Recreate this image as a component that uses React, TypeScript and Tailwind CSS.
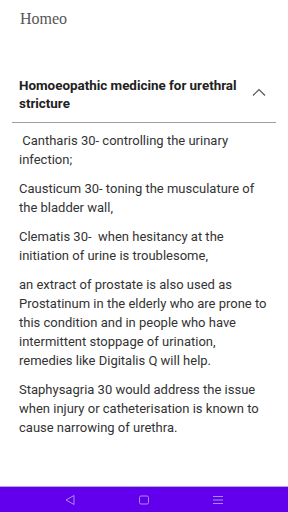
import React from "react";

const paragraphs = [
  " Cantharis 30- controlling the urinary infection;",
  "Causticum 30- toning the musculature of the bladder wall,",
  "Clematis 30-  when hesitancy at the initiation of urine is troublesome,",
  "an extract of prostate is also used as Prostatinum in the elderly who are prone to this condition and in people who have intermittent stoppage of urination, remedies like Digitalis Q will help.",
  "Staphysagria 30 would address the issue when injury or catheterisation is known to cause narrowing of urethra.",
];

export default function App() {
  return (
    <div className="w-[288px] h-[512px] bg-white flex flex-col overflow-hidden">
      <div className="flex-1 flex flex-col">
        {/* app bar */}
        <div className="h-[36px] pl-[20px] pt-[6px]">
          <span className="text-[16px] text-[#555] font-['Liberation_Serif',serif] leading-none">
            Homeo
          </span>
        </div>

        {/* accordion */}
        <div className="mt-[41px] mx-[12px]">
          <div className="flex items-start justify-between pl-[7px] pr-[10px] pb-[9px] border-b border-[#9e9e9e]">
            <h2 className="w-[222px] text-[13.4px] leading-[18px] font-bold text-[#212121] font-['Roboto',sans-serif]">
              Homoeopathic medicine for urethral stricture
            </h2>
            <svg width="14" height="8" viewBox="0 0 14 8" className="mt-[11px]" fill="none" stroke="#555" strokeWidth="1.2">
              <path d="M1 7.5 L7 1.5 L13 7.5" />
            </svg>
          </div>

          <div className="w-[257px] pl-[7px] pt-[8px] flex flex-col gap-[10px] font-['Roboto',sans-serif] text-[13px] leading-[19px] text-[#333]">
            {paragraphs.map((p, i) => (
              <p key={i} className="whitespace-pre-wrap">{p}</p>
            ))}
          </div>
        </div>
      </div>

      {/* nav bar */}
      <div className="h-[26px] bg-[#6200ee] border-t border-[#b6a9d6] flex items-center justify-between px-[64px]">
        <svg width="12" height="12" viewBox="0 0 12 12" fill="none" stroke="#a98af2" strokeWidth="1">
          <path d="M10 1.5 L2 6 L10 10.5 Z" />
        </svg>
        <svg width="12" height="12" viewBox="0 0 12 12" fill="none" stroke="#a98af2" strokeWidth="1">
          <rect x="1.5" y="2" width="9" height="8" rx="1.5" />
        </svg>
        <svg width="12" height="12" viewBox="0 0 12 12" fill="none" stroke="#a98af2" strokeWidth="1">
          <path d="M1 2.5 H11 M1 6 H11 M1 9.5 H11" />
        </svg>
      </div>
    </div>
  );
}
